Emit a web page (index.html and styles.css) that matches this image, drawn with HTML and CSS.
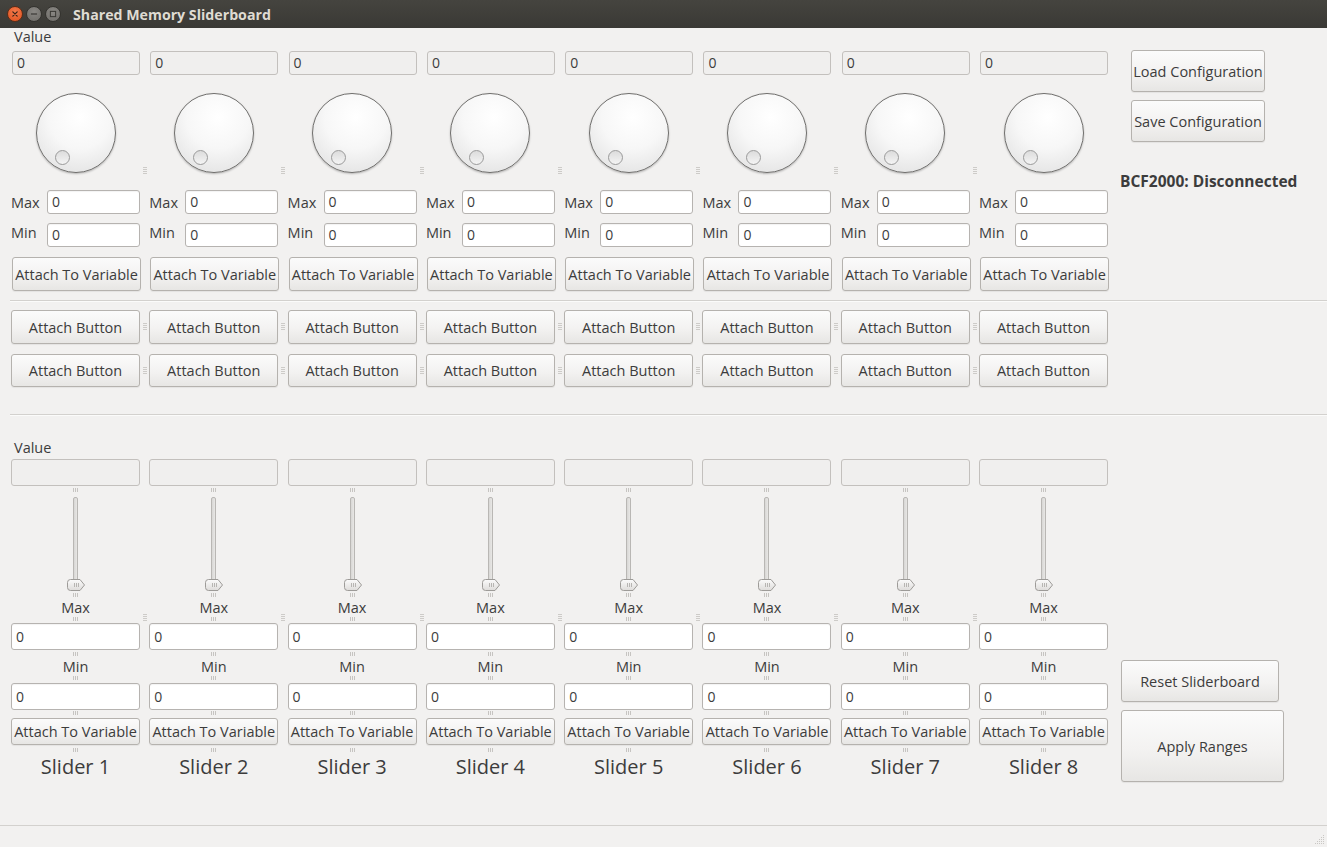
FILE: index.html
```html
<!DOCTYPE html>
<html>
<head>
<meta charset="utf-8">
<title>Shared Memory Sliderboard</title>
<link rel="stylesheet" href="styles.css">
</head>
<body>
<div class="window">
  <header class="titlebar">
    <div class="wbtns">
      <span class="wbtn close"><svg width="16" height="16" viewBox="0 0 16 16"><path d="M5.5 5.5 L10.5 10.5 M10.5 5.5 L5.5 10.5" stroke="#3a2418" stroke-width="1.4" stroke-linecap="round"/></svg></span>
      <span class="wbtn"><svg width="16" height="16" viewBox="0 0 16 16"><path d="M4.5 8 H11.5" stroke="#3b3a36" stroke-width="1.4"/></svg></span>
      <span class="wbtn"><svg width="16" height="16" viewBox="0 0 16 16"><rect x="5" y="5" width="6" height="6" fill="none" stroke="#3b3a36" stroke-width="1.2"/></svg></span>
    </div>
    <span class="title">Shared Memory Sliderboard</span>
  </header>

  <main class="content">
    <section class="top">
      <div class="topmain">
        <div class="lbl value-lbl">Value</div>
        <div class="cols">
          <div class="col"><div class="field dis">0</div><div class="knobwrap"><div class="knob"><span class="dot"></span></div></div><div class="rng"><span>Max</span><div class="field">0</div></div><div class="rng"><span>Min</span><div class="field">0</div></div><button class="btn attach">Attach To Variable</button></div>
          <div class="col"><div class="field dis">0</div><div class="knobwrap"><div class="knob"><span class="dot"></span></div></div><div class="rng"><span>Max</span><div class="field">0</div></div><div class="rng"><span>Min</span><div class="field">0</div></div><button class="btn attach">Attach To Variable</button></div>
          <div class="col"><div class="field dis">0</div><div class="knobwrap"><div class="knob"><span class="dot"></span></div></div><div class="rng"><span>Max</span><div class="field">0</div></div><div class="rng"><span>Min</span><div class="field">0</div></div><button class="btn attach">Attach To Variable</button></div>
          <div class="col"><div class="field dis">0</div><div class="knobwrap"><div class="knob"><span class="dot"></span></div></div><div class="rng"><span>Max</span><div class="field">0</div></div><div class="rng"><span>Min</span><div class="field">0</div></div><button class="btn attach">Attach To Variable</button></div>
          <div class="col"><div class="field dis">0</div><div class="knobwrap"><div class="knob"><span class="dot"></span></div></div><div class="rng"><span>Max</span><div class="field">0</div></div><div class="rng"><span>Min</span><div class="field">0</div></div><button class="btn attach">Attach To Variable</button></div>
          <div class="col"><div class="field dis">0</div><div class="knobwrap"><div class="knob"><span class="dot"></span></div></div><div class="rng"><span>Max</span><div class="field">0</div></div><div class="rng"><span>Min</span><div class="field">0</div></div><button class="btn attach">Attach To Variable</button></div>
          <div class="col"><div class="field dis">0</div><div class="knobwrap"><div class="knob"><span class="dot"></span></div></div><div class="rng"><span>Max</span><div class="field">0</div></div><div class="rng"><span>Min</span><div class="field">0</div></div><button class="btn attach">Attach To Variable</button></div>
          <div class="col"><div class="field dis">0</div><div class="knobwrap"><div class="knob"><span class="dot"></span></div></div><div class="rng"><span>Max</span><div class="field">0</div></div><div class="rng"><span>Min</span><div class="field">0</div></div><button class="btn attach">Attach To Variable</button></div>
        </div>
      </div>
      <aside class="side">
        <button class="btn cfg">Load Configuration</button>
        <button class="btn cfg">Save Configuration</button>
        <div class="status-lbl">BCF2000: Disconnected</div>
      </aside>
    </section>

    <div class="sep"></div>

    <section class="btnrows">
      <div class="brow">
        <button class="btn ab">Attach Button</button><button class="btn ab">Attach Button</button><button class="btn ab">Attach Button</button><button class="btn ab">Attach Button</button><button class="btn ab">Attach Button</button><button class="btn ab">Attach Button</button><button class="btn ab">Attach Button</button><button class="btn ab">Attach Button</button>
      </div>
      <div class="brow">
        <button class="btn ab">Attach Button</button><button class="btn ab">Attach Button</button><button class="btn ab">Attach Button</button><button class="btn ab">Attach Button</button><button class="btn ab">Attach Button</button><button class="btn ab">Attach Button</button><button class="btn ab">Attach Button</button><button class="btn ab">Attach Button</button>
      </div>
    </section>

    <div class="sep"></div>

    <section class="bottom">
      <div class="botmain">
        <div class="lbl value-lbl2">Value</div>
        <div class="cols">
          <div class="scol"><div class="field dis tall"></div><div class="tick ta"></div><div class="slider"><div class="groove"></div><svg class="handle" width="20" height="14" viewBox="0 0 20 14"><defs><linearGradient id="hg1" x1="0" y1="0" x2="0" y2="1"><stop offset="0" stop-color="#fbfbfb"/><stop offset="1" stop-color="#dedcda"/></linearGradient></defs><path d="M4.5 1.5 H14 L18.5 7 L14 12.5 H4.5 Q1.5 12.5 1.5 9.5 V4.5 Q1.5 1.5 4.5 1.5 Z" fill="url(#hg1)" stroke="#9d9b98"/><path d="M8.5 5 V9 M10.5 5 V9 M12.5 5 V9" stroke="#b7b5b2"/></svg></div><div class="tick"></div><div class="lbl c">Max</div><div class="tick tb"></div><div class="field tall">0</div><div class="tick tc"></div><div class="lbl c">Min</div><div class="tick"></div><div class="field tall">0</div><div class="tick"></div><button class="btn attach2">Attach To Variable</button><div class="tick td"></div><div class="sname">Slider 1</div></div>
          <div class="scol"><div class="field dis tall"></div><div class="tick ta"></div><div class="slider"><div class="groove"></div><svg class="handle" width="20" height="14" viewBox="0 0 20 14"><path d="M4.5 1.5 H14 L18.5 7 L14 12.5 H4.5 Q1.5 12.5 1.5 9.5 V4.5 Q1.5 1.5 4.5 1.5 Z" fill="url(#hg1)" stroke="#9d9b98"/><path d="M8.5 5 V9 M10.5 5 V9 M12.5 5 V9" stroke="#b7b5b2"/></svg></div><div class="tick"></div><div class="lbl c">Max</div><div class="tick tb"></div><div class="field tall">0</div><div class="tick tc"></div><div class="lbl c">Min</div><div class="tick"></div><div class="field tall">0</div><div class="tick"></div><button class="btn attach2">Attach To Variable</button><div class="tick td"></div><div class="sname">Slider 2</div></div>
          <div class="scol"><div class="field dis tall"></div><div class="tick ta"></div><div class="slider"><div class="groove"></div><svg class="handle" width="20" height="14" viewBox="0 0 20 14"><path d="M4.5 1.5 H14 L18.5 7 L14 12.5 H4.5 Q1.5 12.5 1.5 9.5 V4.5 Q1.5 1.5 4.5 1.5 Z" fill="url(#hg1)" stroke="#9d9b98"/><path d="M8.5 5 V9 M10.5 5 V9 M12.5 5 V9" stroke="#b7b5b2"/></svg></div><div class="tick"></div><div class="lbl c">Max</div><div class="tick tb"></div><div class="field tall">0</div><div class="tick tc"></div><div class="lbl c">Min</div><div class="tick"></div><div class="field tall">0</div><div class="tick"></div><button class="btn attach2">Attach To Variable</button><div class="tick td"></div><div class="sname">Slider 3</div></div>
          <div class="scol"><div class="field dis tall"></div><div class="tick ta"></div><div class="slider"><div class="groove"></div><svg class="handle" width="20" height="14" viewBox="0 0 20 14"><path d="M4.5 1.5 H14 L18.5 7 L14 12.5 H4.5 Q1.5 12.5 1.5 9.5 V4.5 Q1.5 1.5 4.5 1.5 Z" fill="url(#hg1)" stroke="#9d9b98"/><path d="M8.5 5 V9 M10.5 5 V9 M12.5 5 V9" stroke="#b7b5b2"/></svg></div><div class="tick"></div><div class="lbl c">Max</div><div class="tick tb"></div><div class="field tall">0</div><div class="tick tc"></div><div class="lbl c">Min</div><div class="tick"></div><div class="field tall">0</div><div class="tick"></div><button class="btn attach2">Attach To Variable</button><div class="tick td"></div><div class="sname">Slider 4</div></div>
          <div class="scol"><div class="field dis tall"></div><div class="tick ta"></div><div class="slider"><div class="groove"></div><svg class="handle" width="20" height="14" viewBox="0 0 20 14"><path d="M4.5 1.5 H14 L18.5 7 L14 12.5 H4.5 Q1.5 12.5 1.5 9.5 V4.5 Q1.5 1.5 4.5 1.5 Z" fill="url(#hg1)" stroke="#9d9b98"/><path d="M8.5 5 V9 M10.5 5 V9 M12.5 5 V9" stroke="#b7b5b2"/></svg></div><div class="tick"></div><div class="lbl c">Max</div><div class="tick tb"></div><div class="field tall">0</div><div class="tick tc"></div><div class="lbl c">Min</div><div class="tick"></div><div class="field tall">0</div><div class="tick"></div><button class="btn attach2">Attach To Variable</button><div class="tick td"></div><div class="sname">Slider 5</div></div>
          <div class="scol"><div class="field dis tall"></div><div class="tick ta"></div><div class="slider"><div class="groove"></div><svg class="handle" width="20" height="14" viewBox="0 0 20 14"><path d="M4.5 1.5 H14 L18.5 7 L14 12.5 H4.5 Q1.5 12.5 1.5 9.5 V4.5 Q1.5 1.5 4.5 1.5 Z" fill="url(#hg1)" stroke="#9d9b98"/><path d="M8.5 5 V9 M10.5 5 V9 M12.5 5 V9" stroke="#b7b5b2"/></svg></div><div class="tick"></div><div class="lbl c">Max</div><div class="tick tb"></div><div class="field tall">0</div><div class="tick tc"></div><div class="lbl c">Min</div><div class="tick"></div><div class="field tall">0</div><div class="tick"></div><button class="btn attach2">Attach To Variable</button><div class="tick td"></div><div class="sname">Slider 6</div></div>
          <div class="scol"><div class="field dis tall"></div><div class="tick ta"></div><div class="slider"><div class="groove"></div><svg class="handle" width="20" height="14" viewBox="0 0 20 14"><path d="M4.5 1.5 H14 L18.5 7 L14 12.5 H4.5 Q1.5 12.5 1.5 9.5 V4.5 Q1.5 1.5 4.5 1.5 Z" fill="url(#hg1)" stroke="#9d9b98"/><path d="M8.5 5 V9 M10.5 5 V9 M12.5 5 V9" stroke="#b7b5b2"/></svg></div><div class="tick"></div><div class="lbl c">Max</div><div class="tick tb"></div><div class="field tall">0</div><div class="tick tc"></div><div class="lbl c">Min</div><div class="tick"></div><div class="field tall">0</div><div class="tick"></div><button class="btn attach2">Attach To Variable</button><div class="tick td"></div><div class="sname">Slider 7</div></div>
          <div class="scol"><div class="field dis tall"></div><div class="tick ta"></div><div class="slider"><div class="groove"></div><svg class="handle" width="20" height="14" viewBox="0 0 20 14"><path d="M4.5 1.5 H14 L18.5 7 L14 12.5 H4.5 Q1.5 12.5 1.5 9.5 V4.5 Q1.5 1.5 4.5 1.5 Z" fill="url(#hg1)" stroke="#9d9b98"/><path d="M8.5 5 V9 M10.5 5 V9 M12.5 5 V9" stroke="#b7b5b2"/></svg></div><div class="tick"></div><div class="lbl c">Max</div><div class="tick tb"></div><div class="field tall">0</div><div class="tick tc"></div><div class="lbl c">Min</div><div class="tick"></div><div class="field tall">0</div><div class="tick"></div><button class="btn attach2">Attach To Variable</button><div class="tick td"></div><div class="sname">Slider 8</div></div>
        </div>
      </div>
      <aside class="side2">
        <button class="btn reset">Reset Sliderboard</button>
        <button class="btn apply">Apply Ranges</button>
      </aside>
    </section>

    <footer class="statusbar">
      <svg class="grip" width="12" height="12" viewBox="0 0 12 12"><g fill="#c9c7c4"><rect x="10" y="2" width="1" height="1"/><rect x="8" y="4" width="1" height="1"/><rect x="10" y="4" width="1" height="1"/><rect x="6" y="6" width="1" height="1"/><rect x="8" y="6" width="1" height="1"/><rect x="10" y="6" width="1" height="1"/><rect x="4" y="8" width="1" height="1"/><rect x="6" y="8" width="1" height="1"/><rect x="8" y="8" width="1" height="1"/><rect x="10" y="8" width="1" height="1"/><rect x="2" y="10" width="1" height="1"/><rect x="4" y="10" width="1" height="1"/><rect x="6" y="10" width="1" height="1"/><rect x="8" y="10" width="1" height="1"/><rect x="10" y="10" width="1" height="1"/></g></svg>
    </footer>
  </main>
</div>
</body>
</html>
```

FILE: styles.css
```css
* { box-sizing: border-box; }
html, body { margin: 0; padding: 0; }
body {
  width: 1327px;
  height: 847px;
  overflow: hidden;
  background: #f2f1f0;
  font-family: "Open Sans", "Noto Sans", sans-serif;
  font-size: 14.5px;
  color: #3c3c3c;
}
.window { display: flex; flex-direction: column; height: 847px; }

.titlebar {
  height: 28px;
  background: linear-gradient(#45443f, #3a3935);
  display: flex;
  align-items: center;
  padding-left: 7px;
  flex: none;
}
.wbtns { display: flex; gap: 3px; }
.wbtn {
  width: 16px; height: 16px; border-radius: 50%;
  background: radial-gradient(circle at 50% 35%, #8a8884, #6d6b67);
  border: 1px solid #34332f;
  display: flex; align-items: center; justify-content: center;
}
.wbtn svg { display: block; }
.wbtn.close { background: radial-gradient(circle at 50% 35%, #f37a4c, #e0501c); border-color: #5b2d18; }
.title {
  margin-left: 12px;
  color: #dfdbd2;
  font-weight: 700;
  font-size: 14.2px;
}

.content { flex: 1; display: flex; flex-direction: column; }

.lbl { font-size: 14.5px; line-height: 17px; height: 17px; }
.lbl.c { text-align: center; height: 16px; line-height: 16px; }

.cols {
  display: grid;
  grid-template-columns: repeat(8, 129px);
  column-gap: 9.3px;
}

/* top section */
.top { display: flex; height: 272px; padding-left: 11px; }
.topmain { width: 1097px; }
.value-lbl { margin: 0 0 6px 3px; }
.col { display: flex; flex-direction: column; position: relative; }
.col:not(:last-child)::after,
.scol:not(:last-child)::after {
  content: "";
  position: absolute;
  right: -7px;
  top: 116px;
  width: 4px; height: 7px;
  background: repeating-linear-gradient(to bottom, #cdcbc8 0 1px, transparent 1px 2px);
}
.scol:not(:last-child)::after { top: 155px; }

.field {
  height: 24px;
  background: #fff;
  border: 1px solid #b6b3b0;
  border-radius: 3px;
  padding-left: 4px;
  font-size: 14px;
  line-height: 22px;
  color: #3c3c3c;
  box-shadow: inset 0 1px 1px rgba(0,0,0,0.05);
}
.field.dis { background: #f0efee; border-color: #c3c0bd; box-shadow: none; }
.col > .field.dis { margin-left: 1px; }

.knobwrap { height: 115px; display: flex; justify-content: center; padding-top: 18px; }
.knob {
  position: relative;
  width: 80px; height: 80px; border-radius: 50%;
  border: 1px solid #6f6e6c;
  background: radial-gradient(circle at 55% 30%, #ffffff 0%, #f7f7f7 45%, #e6e6e6 80%, #d9d9d9 100%);
  box-shadow: 0 1px 2px rgba(0,0,0,0.25);
}
.dot {
  position: absolute; left: 18px; top: 56px;
  width: 15px; height: 15px; border-radius: 50%;
  border: 1px solid #9a9a9a;
  background: linear-gradient(#dcdcdc, #f4f4f4);
}

.rng { display: flex; align-items: center; height: 24px; }
.rng span { width: 36px; font-size: 14.5px; }
.rng .field { width: 93px; }
.rng + .rng { margin-top: 9px; }
.rng + .rng span { margin-top: -6px; }

.btn {
  position: relative;
  font-family: inherit;
  font-size: 14.5px;
  color: #3c3c3c;
  background: linear-gradient(#fbfbfb, #f3f2f1 55%, #e7e6e4);
  border: 1px solid #b5b2ae;
  border-radius: 3px;
  box-shadow: 0 1px 1px rgba(0,0,0,0.06);
  padding: 0;
  white-space: nowrap;
  cursor: default;
}
.attach { margin-top: 10px; height: 34px; width: 129px; margin-left: 1px; }

.side { width: 207px; margin-left: 12px; display: flex; flex-direction: column; }
.cfg { width: 134px; height: 42px; margin-left: 11px; }
.cfg:first-child { margin-top: 22px; }
.cfg + .cfg { margin-top: 8px; }
.status-lbl { margin-top: 28px; font-weight: 700; font-size: 15.5px; color: #3c3c3c; }

.sep { height: 2px; margin-left: 10px; border-top: 1px solid #d3d1ce; border-bottom: 1px solid #fbfbfa; flex: none; }

.btnrows { height: 112px; padding: 8px 0 0 11px; display: flex; flex-direction: column; gap: 10px; }
.brow { display: grid; grid-template-columns: repeat(8, 129px); column-gap: 9.3px; }
.ab { height: 34px; }
.brow + .brow .ab { height: 33px; }
.ab:not(:last-child)::after {
  content: "";
  position: absolute;
  right: -8px; top: 50%;
  margin-top: -4px;
  width: 4px; height: 7px;
  background: repeating-linear-gradient(to bottom, #cdcbc8 0 1px, transparent 1px 2px);
}

/* bottom section */
.bottom { height: 409px; display: flex; padding-left: 11px; flex: none; }
.botmain { width: 1097px; }
.value-lbl2 { margin: 23px 0 3px 3px; }
.scol { display: flex; flex-direction: column; position: relative; }
.field.tall { height: 27px; line-height: 25px; }
.tick {
  width: 5px; height: 4px; margin: 1px auto 3px;
  background: repeating-linear-gradient(to right, #c6c4c1 0 1px, transparent 1px 2px);
  flex: none;
}
.tick.ta { margin: 2px auto 4px; }
.tick.tb { margin: 1px auto 2px; }
.tick.tc { margin: 2px auto 3px; }
.tick.td { margin: 3px auto 0; }
.slider { height: 96px; position: relative; display: flex; justify-content: center; }
.groove {
  width: 5px; height: 91px; margin-top: 1px;
  border: 1px solid #b9b7b4; border-radius: 2px;
  background: linear-gradient(to right, #d8d7d5, #e8e7e5);
}
.handle { position: absolute; left: 55px; top: 82px; }
.attach2 { height: 27px; }
.sname { text-align: center; font-size: 20px; line-height: 22px; margin-top: 4px; }

.side2 { margin-left: 13px; padding-top: 244px; display: flex; flex-direction: column; }
.reset { width: 158px; height: 42px; }
.apply { width: 163px; height: 72px; margin-top: 8px; }

.statusbar {
  flex: 1;
  border-top: 1px solid #d3d1ce;
  display: flex; justify-content: flex-end; align-items: flex-end;
  padding: 0 2px 2px 0;
}
.grip { display: block; }
```
